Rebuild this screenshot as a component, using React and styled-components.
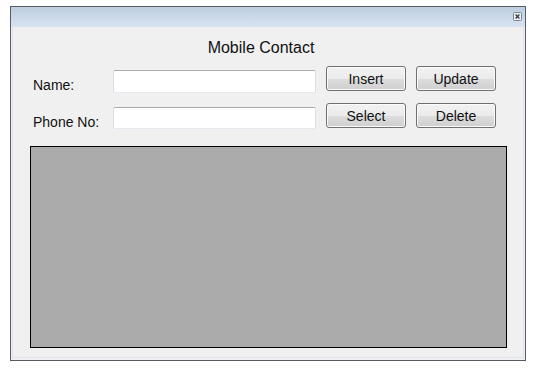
import React from 'react';
import styled, { createGlobalStyle } from 'styled-components';

const GlobalStyle = createGlobalStyle`
  html, body {
    margin: 0;
    padding: 0;
    background: #ffffff;
    font-family: "Liberation Sans", Arial, sans-serif;
  }
`;

const App = () => {
  return (
    <>
      <GlobalStyle />
      <Window>
        <TitleBar>
          <CloseButton aria-label="Close">
            <svg width="9" height="9" viewBox="0 0 9 9">
              <rect x="0.5" y="0.5" width="8" height="8" rx="1" fill="#eef1f5" stroke="#7d8794" />
              <path d="M2.6 2.6 L6.4 6.4 M6.4 2.6 L2.6 6.4" stroke="#3c4046" strokeWidth="1.4" />
            </svg>
          </CloseButton>
        </TitleBar>
        <Client>
          <Heading>Mobile Contact</Heading>
          <FormRow>
            <FieldLabel>Name:</FieldLabel>
            <TextBox tall />
            <ActionButton>Insert</ActionButton>
            <ActionButton>Update</ActionButton>
          </FormRow>
          <FormRow>
            <FieldLabel>Phone No:</FieldLabel>
            <TextBox />
            <ActionButton>Select</ActionButton>
            <ActionButton>Delete</ActionButton>
          </FormRow>
          <GridPanel />
        </Client>
      </Window>
    </>
  );
};

export default App;

const Window = styled.div`
  box-sizing: border-box;
  margin: 6px 0 0 10px;
  width: 516px;
  height: 355px;
  border: 1px solid #575c63;
  background: #f0f0f0;
  display: flex;
  flex-direction: column;
`;
const TitleBar = styled.div`
  height: 20px;
  background: linear-gradient(to bottom, #bccde0, #d9e4f2);
  display: flex;
  justify-content: flex-end;
  align-items: flex-start;
  padding-right: 3px;
`;
const CloseButton = styled.div`
  width: 9px;
  height: 9px;
  margin-top: 5px;
  display: flex;
`;
const Client = styled.div`
  flex: 1;
  margin: 0 1px 2px 1px;
  border: 1px solid #dde4ee;
  border-top: none;
  padding-left: 17px;
  display: flex;
  flex-direction: column;
`;
const Heading = styled.div`
  margin-top: 11px;
  padding-right: 31px;
  text-align: center;
  font-size: 16px;
  line-height: 20px;
  color: #111111;
`;
const FormRow = styled.div`
  display: flex;
  align-items: flex-start;
  height: 25px;
  margin-top: 8px;
  padding-left: 3px;
  & + & {
    margin-top: 12px;
  }
`;
const FieldLabel = styled.div`
  width: 80px;
  margin-top: 11px;
  font-size: 14px;
  line-height: 16px;
  color: #111111;
`;
const TextBox = styled.div`
  box-sizing: border-box;
  width: 203px;
  height: ${(p) => (p.tall ? '23px' : '22px')};
  margin-top: 4px;
  margin-right: 10px;
  background: #ffffff;
  border: 1px solid #dbdfe6;
  border-top-color: #abadb3;
  border-bottom-color: #e3e9ef;
  border-radius: 2px;
`;
const ActionButton = styled.button`
  box-sizing: border-box;
  width: 80px;
  height: 25px;
  margin-right: 10px;
  padding: 0;
  border: 1px solid #707070;
  border-radius: 3px;
  background: linear-gradient(to bottom, #f2f2f2 0%, #ebebeb 50%, #dddddd 51%, #cfcfcf 100%);
  box-shadow: inset 0 0 0 1px #fbfbfb;
  font-family: "Liberation Sans", Arial, sans-serif;
  font-size: 14px;
  color: #111111;
`;
const GridPanel = styled.div`
  box-sizing: border-box;
  width: 477px;
  height: 202px;
  margin-top: 18px;
  background: #ababab;
  border: 1px solid #000000;
`;
